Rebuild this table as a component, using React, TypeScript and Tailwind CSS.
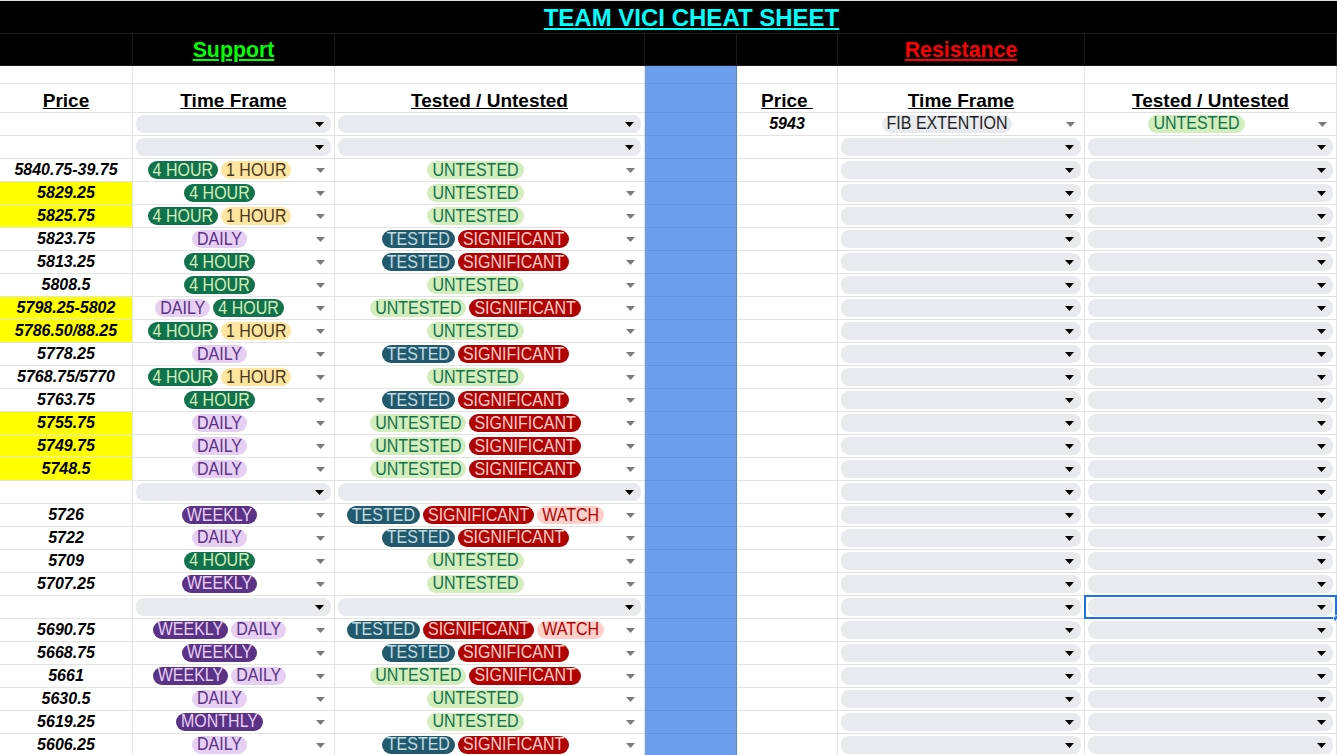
import React from "react";

type Row = { price: string; hi?: boolean; tf: string[]; tu: string[] } | null;

const H4 = "4 HOUR";
const H1 = "1 HOUR";
const D = "DAILY";
const W = "WEEKLY";
const U = "UNTESTED";
const T = "TESTED";
const S = "SIGNIFICANT";

const chipColors: Record<string, string> = {
  "4 HOUR": "bg-[#11734b] text-[#d4edbc]",
  "1 HOUR": "bg-[#ffe5a0] text-[#473821]",
  DAILY: "bg-[#e6cff2] text-[#5a3286]",
  WEEKLY: "bg-[#5a3286] text-[#e6cff2]",
  MONTHLY: "bg-[#5a3286] text-[#e6cff2]",
  UNTESTED: "bg-[#d4edbc] text-[#11734b]",
  TESTED: "bg-[#215a6c] text-[#c6dbe1]",
  SIGNIFICANT: "bg-[#b10202] text-[#ffcfc9]",
  WATCH: "bg-[#ffcfc9] text-[#b10202]",
  "FIB EXTENTION": "bg-[#e8eaed] text-[#1f1f1f]",
};

const support: Row[] = [
  null,
  null,
  { price: "5840.75-39.75", tf: [H4, H1], tu: [U] },
  { price: "5829.25", hi: true, tf: [H4], tu: [U] },
  { price: "5825.75", hi: true, tf: [H4, H1], tu: [U] },
  { price: "5823.75", tf: [D], tu: [T, S] },
  { price: "5813.25", tf: [H4], tu: [T, S] },
  { price: "5808.5", tf: [H4], tu: [U] },
  { price: "5798.25-5802", hi: true, tf: [D, H4], tu: [U, S] },
  { price: "5786.50/88.25", hi: true, tf: [H4, H1], tu: [U] },
  { price: "5778.25", tf: [D], tu: [T, S] },
  { price: "5768.75/5770", tf: [H4, H1], tu: [U] },
  { price: "5763.75", tf: [H4], tu: [T, S] },
  { price: "5755.75", hi: true, tf: [D], tu: [U, S] },
  { price: "5749.75", hi: true, tf: [D], tu: [U, S] },
  { price: "5748.5", hi: true, tf: [D], tu: [U, S] },
  null,
  { price: "5726", tf: [W], tu: [T, S, "WATCH"] },
  { price: "5722", tf: [D], tu: [T, S] },
  { price: "5709", tf: [H4], tu: [U] },
  { price: "5707.25", tf: [W], tu: [U] },
  null,
  { price: "5690.75", tf: [W, D], tu: [T, S, "WATCH"] },
  { price: "5668.75", tf: [W], tu: [T, S] },
  { price: "5661", tf: [W, D], tu: [U, S] },
  { price: "5630.5", tf: [D], tu: [U] },
  { price: "5619.25", tf: ["MONTHLY"], tu: [U] },
  { price: "5606.25", tf: [D], tu: [T, S] },
];

const resistanceTop: Row = { price: "5943", tf: ["FIB EXTENTION"], tu: [U] };

const cell = "border-r border-b border-[#e2e2e2]";
const blue = "bg-[#6d9eeb] border-r border-b border-r-[#5a86d0] border-b-[#6592e0]";
const dark = "bg-black border-r border-b border-[#1b1b1b]";

function Arrow({ black }: { black?: boolean }) {
  return (
    <svg width="9" height="5" viewBox="0 0 9 5">
      <polygon points="0,0 9,0 4.5,5" fill={black ? "#000" : "#7a7a7a"} />
    </svg>
  );
}

function ChipCell({ chips }: { chips: string[] }) {
  return (
    <div className={`h-[23px] ${cell} flex items-center`}>
      <div className="flex-1 flex justify-center gap-[3px] min-w-0">
        {chips.map((c, i) => (
          <span
            key={i}
            className={`rounded-full px-[5px] h-[18px] leading-[18px] text-[16px] whitespace-nowrap ${chipColors[c]}`}
          >
            <span className="inline-block scale-y-[1.1]">{c}</span>
          </span>
        ))}
      </div>
      <div className="w-[28px] flex justify-end pr-[9px]">
        <Arrow />
      </div>
    </div>
  );
}

function EmptyCell({ selected }: { selected?: boolean }) {
  return (
    <div className={`h-[23px] ${cell} px-[3px] py-[2px] relative`}>
      <div className="h-full rounded-[8px] bg-[#e8eaed] flex items-center justify-end pr-[7px]">
        <Arrow black />
      </div>
      {selected && (
        <>
          <div className="absolute -inset-px border-2 border-[#1a73e8]" />
          <div className="absolute -right-[4px] -bottom-[4px] w-[7px] h-[7px] rounded-full bg-[#1a73e8] border border-white" />
        </>
      )}
    </div>
  );
}

function PriceCell({ row }: { row: Row }) {
  return (
    <div
      className={`h-[23px] ${cell} flex items-center justify-center font-bold italic text-[16px] text-black ${
        row?.hi ? "bg-[#ffff00]" : ""
      }`}
    >
      {row?.price}
    </div>
  );
}

function Side({ row, selected }: { row: Row; selected?: boolean }) {
  return (
    <>
      <PriceCell row={row} />
      {row ? <ChipCell chips={row.tf} /> : <EmptyCell />}
      {row ? <ChipCell chips={row.tu} /> : <EmptyCell selected={selected} />}
    </>
  );
}

function Header({ label }: { label: string }) {
  return (
    <div className={`h-[29px] ${cell} flex justify-center pt-[6px]`}>
      <span className="font-bold underline text-[19px] leading-[22px] text-black whitespace-pre">
        {label}
      </span>
    </div>
  );
}

export default function App() {
  return (
    <div className="w-[1337px] h-[755px] overflow-hidden bg-white font-['Liberation_Sans',Arial,sans-serif]">
      <div className="grid grid-cols-[133px_202px_310px_92px_101px_247px_252px]">
        {/* title */}
        <div className="col-span-7 h-[34px] bg-black border-t border-t-[#e0e0e0] border-b border-b-[#1b1b1b] flex justify-center pl-[46px] pt-[3px]">
          <span className="font-bold underline text-[24px] leading-[28px] text-[#00ffff]">
            TEAM VICI CHEAT SHEET
          </span>
        </div>

        {/* support / resistance */}
        <div className={`h-[32px] ${dark}`} />
        <div className={`h-[32px] ${dark} flex justify-center pt-[3px]`}>
          <span className="font-bold underline text-[21.33px] leading-[26px] text-[#00ff00]">
            Support
          </span>
        </div>
        <div className={`h-[32px] ${dark}`} />
        <div className={`h-[32px] ${dark}`} />
        <div className={`h-[32px] ${dark}`} />
        <div className={`h-[32px] ${dark} flex justify-center pt-[3px]`}>
          <span className="font-bold underline text-[21.33px] leading-[26px] text-[#ff0000]">
            Resistance
          </span>
        </div>
        <div className={`h-[32px] ${dark}`} />

        {/* spacer row */}
        <div className={`h-[18px] ${cell}`} />
        <div className={`h-[18px] ${cell}`} />
        <div className={`h-[18px] ${cell}`} />
        <div className={`h-[18px] ${blue}`} />
        <div className={`h-[18px] ${cell}`} />
        <div className={`h-[18px] ${cell}`} />
        <div className={`h-[18px] ${cell}`} />

        {/* column headers */}
        <Header label="Price" />
        <Header label="Time Frame" />
        <Header label="Tested / Untested" />
        <div className={`h-[29px] ${blue}`} />
        <Header label={"Price\u00a0"} />
        <Header label="Time Frame" />
        <Header label="Tested / Untested" />

        {support.map((row, i) => (
          <React.Fragment key={i}>
            <Side row={row} />
            <div className={`h-[23px] ${blue}`} />
            <Side row={i === 0 ? resistanceTop : null} selected={i === 21} />
          </React.Fragment>
        ))}
      </div>
    </div>
  );
}
